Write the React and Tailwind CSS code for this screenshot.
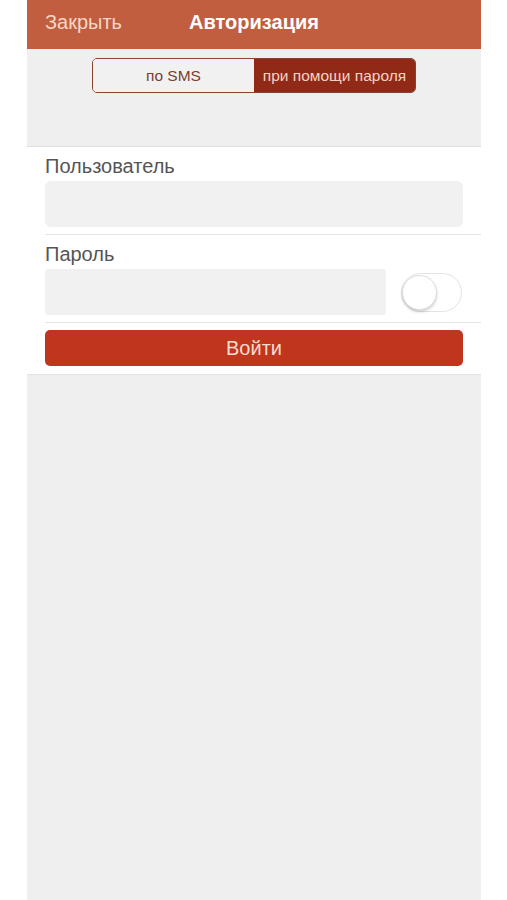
export default function App() {
  return (
    <div
      className="min-h-[900px] bg-white pl-[27px]"
      style={{ fontFamily: '"Liberation Sans", Arial, sans-serif' }}
    >
      <div className="w-[454px] h-[900px] bg-[#efefef] flex flex-col">
        {/* Header */}
        <div className="relative h-[49px] pb-[5px] bg-[#c15e3f] flex items-center">
          <span className="pl-[18px] text-[20px] text-[#f6d6c6]">Закрыть</span>
          <span className="absolute left-0 right-0 text-center text-[20px] font-bold text-white pointer-events-none">
            Авторизация
          </span>
        </div>

        {/* Segmented area */}
        <div className="h-[98px] pt-[9px] flex justify-center border-b border-[#dedede]">
          <div className="w-[324px] h-[35px] flex rounded-[5px] border-[1.5px] border-[#8a4233] overflow-hidden">
            <div className="flex-1 flex items-center justify-center bg-[#f1f1f1] text-[15.5px] text-[#7b3d2f]">
              по SMS
            </div>
            <div className="flex-1 flex items-center justify-center bg-[#902a17] text-[15.5px] text-[#f5d2c2]">
              при помощи пароля
            </div>
          </div>
        </div>

        {/* Form */}
        <div className="bg-white border-b border-[#e2e2e2]">
          <div className="pl-[18px]">
            <div className="pt-[8px] pb-[7px] pr-[18px] border-b border-[#e4e4e4]">
              <div className="text-[20px] leading-[22px] text-[#555555]">Пользователь</div>
              <div className="mt-[4px] h-[46px] rounded-[6px] bg-[#f1f1f1]" />
            </div>
            <div className="pt-[8px] pb-[7px] pr-[19px] border-b border-[#e4e4e4]">
              <div className="text-[20px] leading-[22px] text-[#555555]">Пароль</div>
              <div className="mt-[4px] flex items-center gap-[15px]">
                <div className="flex-1 h-[46px] rounded-[4px] bg-[#f1f1f1]" />
                <div className="relative w-[61px] h-[39px] rounded-full border border-[#e3e3e3] bg-white">
                  <div className="absolute left-[0px] top-[1px] w-[35px] h-[35px] rounded-full bg-white border border-[#dcdcdc] shadow-[0_2px_3px_rgba(0,0,0,0.18)]" />
                </div>
              </div>
            </div>
          </div>
          <div className="px-[18px] pt-[7px] pb-[8px]">
            <div className="h-[36px] rounded-[5px] bg-[#c0351e] flex items-center justify-center text-[20px] text-[#f9dccd]">
              Войти
            </div>
          </div>
        </div>
      </div>
    </div>
  );
}
